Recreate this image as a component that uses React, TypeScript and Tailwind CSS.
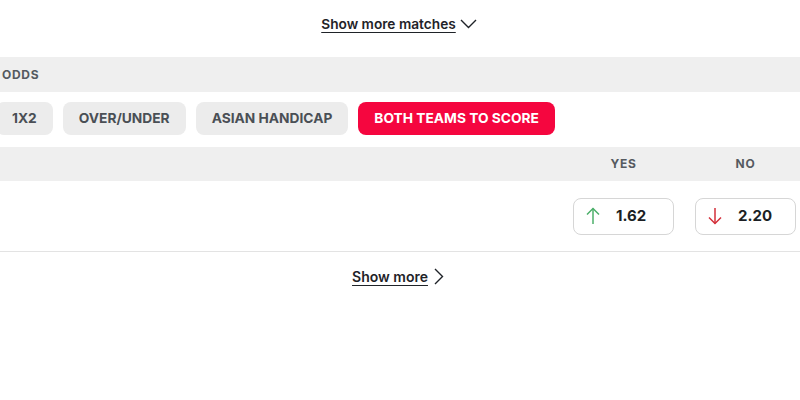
import React from "react";

const tabs = ["1X2", "OVER/UNDER", "ASIAN HANDICAP", "BOTH TEAMS TO SCORE"];

function ChevronDown() {
  return (
    <svg width="17" height="10" viewBox="0 0 17 10" fill="none" stroke="#1f2328" strokeWidth="1.4" aria-hidden="true">
      <polyline points="1,1 8.5,8.5 16,1" />
    </svg>
  );
}

function ChevronRight() {
  return (
    <svg width="10" height="17" viewBox="0 0 10 17" fill="none" stroke="#1f2328" strokeWidth="1.4" aria-hidden="true">
      <polyline points="1,1 8.5,8.5 1,16" />
    </svg>
  );
}

function Arrow({ up }: { up: boolean }) {
  const color = up ? "#4caf6a" : "#d32f3a";
  return (
    <svg width="14" height="18" viewBox="0 0 14 18" fill="none" stroke={color} strokeWidth="1.5" aria-hidden="true">
      {up ? (
        <>
          <line x1="7" y1="1.5" x2="7" y2="17" />
          <polyline points="1,7.5 7,1.5 13,7.5" />
        </>
      ) : (
        <>
          <line x1="7" y1="1" x2="7" y2="16.5" />
          <polyline points="1,10.5 7,16.5 13,10.5" />
        </>
      )}
    </svg>
  );
}

function OddsButton({ up, value }: { up: boolean; value: string }) {
  return (
    <button className="flex h-[37px] w-[101px] items-center gap-[16px] rounded-[8px] border border-[#d6d6d6] bg-white pl-[12px]">
      <Arrow up={up} />
      <span className="text-[15px] font-bold text-[#1c1f24]">{value}</span>
    </button>
  );
}

export default function App() {
  return (
    <div
      className="h-[400px] w-[800px] overflow-hidden bg-white"
      style={{ fontFamily: "Inter, 'Noto Sans', sans-serif" }}
    >
      {/* Show more matches */}
      <div className="flex h-[48px] items-center justify-center pr-[2px]">
        <button className="flex items-center gap-[4px]">
          <span className="text-[13.7px] font-semibold text-[#1f2328] underline underline-offset-[3px]">
            Show more matches
          </span>
          <ChevronDown />
        </button>
      </div>

      {/* Odds header */}
      <div className="mt-[9px] flex h-[35px] items-center bg-[#efefef] pl-[2px]">
        <span className="text-[12px] font-bold tracking-[0.06em] text-[#555a60]">ODDS</span>
      </div>

      {/* Market tabs */}
      <div className="-ml-[4px] mt-[10px] flex gap-[10px]">
        {tabs.map((t, i) => {
          const active = i === tabs.length - 1;
          return (
            <button
              key={t}
              className={
                active
                  ? "h-[33px] rounded-[8px] bg-[#f5063f] px-[16px] text-[13.75px] font-bold text-white"
                  : "h-[33px] rounded-[8px] bg-[#ececec] px-[16px] text-[13.75px] font-bold text-[#4a4f55]"
              }
            >
              {t}
            </button>
          );
        })}
      </div>

      {/* Column header */}
      <div className="mt-[12px] flex h-[34px] items-center justify-end gap-[21px] bg-[#efefef] pr-[4px]">
        <span className="w-[101px] text-center text-[12px] font-bold tracking-[0.06em] text-[#555a60]">YES</span>
        <span className="w-[101px] text-center text-[12px] font-bold tracking-[0.06em] text-[#555a60]">NO</span>
      </div>

      {/* Odds row */}
      <div className="flex h-[71px] items-center justify-end gap-[21px] border-b border-[#e3e3e3] pr-[4px]">
        <OddsButton up value="1.62" />
        <OddsButton up={false} value="2.20" />
      </div>

      {/* Show more */}
      <div className="flex h-[48px] items-center justify-center pr-[4px]">
        <button className="flex items-center gap-[6px]">
          <span className="text-[14px] font-semibold text-[#1f2328] underline underline-offset-[3px]">Show more</span>
          <ChevronRight />
        </button>
      </div>
    </div>
  );
}
